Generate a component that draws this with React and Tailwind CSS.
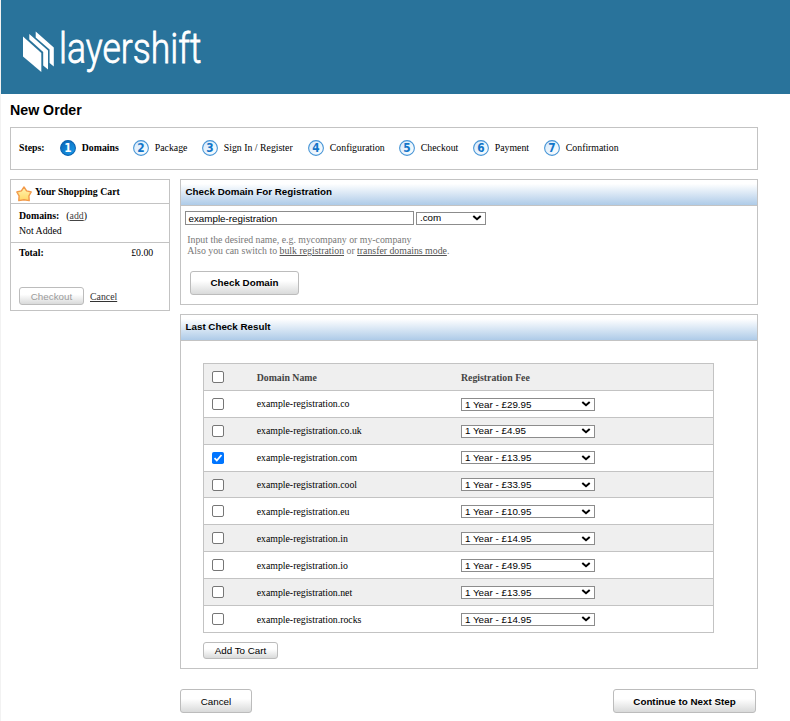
import React from "react";

const steps = [
  ["Domains", "w-[73px]"],
  ["Package", "w-[69px]"],
  ["Sign In / Register", "w-[106px]"],
  ["Configuration", "w-[91px]"],
  ["Checkout", "w-[74px]"],
  ["Payment", "w-[71px]"],
  ["Confirmation", "w-[80px]"],
];

const domains = [
  ["example-registration.co", "29.95"],
  ["example-registration.co.uk", "4.95"],
  ["example-registration.com", "13.95"],
  ["example-registration.cool", "33.95"],
  ["example-registration.eu", "10.95"],
  ["example-registration.in", "14.95"],
  ["example-registration.io", "49.95"],
  ["example-registration.net", "13.95"],
  ["example-registration.rocks", "14.95"],
];

const sans = "font-['Liberation_Sans',Arial,sans-serif]";

function Logo() {
  return (
    <svg className="block overflow-visible" width="200" height="60" viewBox="0 0 200 60">
      <g fill="#fff">
        <path d="M1 8.5 19.3 25V44L1 28.5Z" />
        <path d="M7.3 6 26 22.5V41.5L21.2 37.5V24L7.3 11.5Z" />
        <path d="M13.7 3.5 31.8 19.5V38.5L27.6 35V21.5L13.7 9.5Z" />
      </g>
      <text x="37" y="35" fill="#fff" stroke="#fff" strokeWidth="0.8" fontSize="42.5" fontFamily="Roboto, sans-serif" fontWeight="300" textLength="142.5" lengthAdjust="spacingAndGlyphs">layershift</text>
    </svg>
  );
}

function StepIcon({ n, active }) {
  const id = "step" + n;
  return (
    <svg width="16" height="16" viewBox="0 0 16 16" className="block shrink-0">
      <defs>
        <linearGradient id={id} x1="0" y1="0" x2="1" y2="1">
          <stop offset="0" stopColor={active ? "#0860b4" : "#d5e9fa"} />
          <stop offset="1" stopColor={active ? "#1aa0ee" : "#fff"} />
        </linearGradient>
      </defs>
      <circle cx="8" cy="8" r="7.4" fill={"url(#" + id + ")"} stroke={active ? "#0b62b0" : "#4795d6"} strokeWidth="1.1" />
      <text x="4.3" y="12" textLength="7.4" lengthAdjust="spacingAndGlyphs" fontSize="11.5" fontWeight="700" fontFamily="'DejaVu Sans', sans-serif" fill={active ? "#fff" : "#1275c9"}>{n}</text>
    </svg>
  );
}

function Star() {
  return (
    <svg width="16" height="16" viewBox="0 0 16 16" className="block shrink-0">
      <defs>
        <linearGradient id="star" x1="0" y1="0" x2="0" y2="1">
          <stop offset="0" stopColor="#fff6b4" />
          <stop offset="1" stopColor="#ffd766" />
        </linearGradient>
      </defs>
      <path d="M8 1 10.6 4.9 15.2 6 12.9 9.8 13.2 14.6 8 13.8 2.8 14.6 3.1 9.8 0.8 6 5.4 4.9Z" fill="url(#star)" stroke="#f29a4a" strokeWidth="1.4" strokeLinejoin="round" />
    </svg>
  );
}

function Select({ children, className }) {
  return (
    <div className={`flex h-[13px] items-center justify-between border border-[#8c8c8c] bg-white pl-[3px] pr-[3px] ${sans} ${className}`}>
      <span className="pt-[0.8px]">{children}</span>
      <svg width="10" height="6" viewBox="0 0 10 6" className="block"><path d="M1.3 1.1 5 4.3 8.7 1.1" fill="none" stroke="#000" strokeWidth="2" /></svg>
    </div>
  );
}

function Button({ children, className }) {
  return (
    <button className={`block rounded-[3px] border border-[#bcbcbc] bg-linear-to-b from-white from-40% to-[#d9dada] text-center text-[9.8px] ${sans} ${className}`}>
      {children}
    </button>
  );
}

function Checkbox({ checked }) {
  if (checked) {
    return (
      <svg width="12" height="12" viewBox="0 0 12 12" className="block">
        <rect width="12" height="12" rx="1.8" fill="#0075ff" />
        <path d="M2.5 6.2 4.8 8.5 9.5 3" fill="none" stroke="#fff" strokeWidth="1.8" />
      </svg>
    );
  }
  return <div className="size-[12px] rounded-[2px] border border-[#767676] bg-white" />;
}

function PanelTitle({ children }) {
  return (
    <h2 className={`h-[26px] border-b border-[#c3c3c3] bg-linear-to-b from-white from-15% to-[#aecbe8] pl-[4.5px] text-[9.8px] font-bold leading-[24px] ${sans}`}>
      {children}
    </h2>
  );
}

export default function App() {
  return (
    <div className="h-[721px] w-[790px] overflow-hidden border-l border-[#f2f2f2] bg-white font-['Liberation_Serif','Times_New_Roman',serif] text-[9.8px] leading-[12px] text-[#1a1a1a]">
      <header className="h-[94px] bg-[#29739b] pl-[21px] pt-[28px]">
        <Logo />
      </header>
      <div className="w-[757px] pl-[9px] text-black">
        <h1 className={`h-[33px] pt-[7px] text-[14.2px] font-bold leading-[18px] ${sans}`}>New Order</h1>

        <section className="flex h-[43px] items-center border border-[#c3c3c3] pb-[2px] pl-[8px]">
          <b className="w-[41px]">Steps:</b>
          {steps.map(([name, width], i) => (
            <div key={name} className={`flex shrink-0 items-center gap-[5.8px] whitespace-nowrap ${width}`}>
              <StepIcon n={i + 1} active={i === 0} />
              <span className={i === 0 ? "font-bold" : ""}>{name}</span>
            </div>
          ))}
        </section>

        <div className="mt-[9px] flex items-start gap-[10px]">
          <aside className="h-[132px] w-[160px] border border-[#c3c3c3]">
            <div className="flex h-[24px] items-start gap-[3px] border-b border-[#c3c3c3] pl-[5px] pt-[6px]">
              <Star />
              <b>Your Shopping Cart</b>
            </div>
            <div className="h-[39px] border-b border-[#c3c3c3] pl-[8px] pt-[4px] leading-[15px]">
              <div><b>Domains:</b><span className="ml-[7px]">(<a className="text-[#444] underline">add</a>)</span></div>
              <div>Not Added</div>
            </div>
            <div className="flex justify-between pl-[8px] pr-[15.8px] pt-[4px]">
              <b>Total:</b>
              <span>£0.00</span>
            </div>
            <div className="mt-[28px] flex items-center gap-[6px] pl-[8px]">
              <Button className="h-[18px] w-[65px] pt-px text-[#9b9b9b]">Checkout</Button>
              <a className="pt-[2px] text-[#333] underline">Cancel</a>
            </div>
          </aside>

          <main className="w-[578px]">
            <section className="h-[126px] border border-[#c3c3c3]">
              <PanelTitle>Check Domain For Registration</PanelTitle>
              <div className="flex items-center gap-[2px] pl-[4px] pt-[5px]">
                <div className={`h-[14px] w-[229px] border border-[#8c8c8c] pl-[2.5px] leading-[13px] ${sans}`}>example-registration</div>
                <Select className="w-[70px]">.com</Select>
              </div>
              <p className="mt-[9px] pl-[6.3px] leading-[11px] text-[#777]">
                Input the desired name, e.g. mycompany or my-company<br />
                Also you can switch to <a className="text-[#555] underline">bulk registration</a> or <a className="text-[#555] underline">transfer domains mode</a>.
              </p>
              <Button className="ml-[9px] mt-[15px] h-[24px] w-[109px] font-bold">Check Domain</Button>
            </section>

            <section className="mt-[9px] h-[355px] border border-[#c3c3c3]">
              <PanelTitle>Last Check Result</PanelTitle>
              <div className="ml-[22px] mt-[22px] w-[511px] border-x border-t border-[#c3c3c3]">
                <div className="flex h-[26.9px] items-center border-b border-[#c3c3c3] bg-[#efefef] pl-[8px] font-bold text-[#444]">
                  <div className="w-[44.7px]"><Checkbox /></div>
                  <div className="w-[204.3px] pt-[2px]">Domain Name</div>
                  <div className="pt-[2px]">Registration Fee</div>
                </div>
                {domains.map(([name, fee], i) => (
                  <div key={name} className={`flex h-[26.9px] items-center border-b border-[#c3c3c3] pl-[8px] ${i % 2 ? "bg-[#efefef]" : "bg-white"}`}>
                    <div className="w-[44.7px]"><Checkbox checked={i === 2} /></div>
                    <div className="w-[204.3px] pt-[1.3px]">{name}</div>
                    <div className="pt-[0.6px]"><Select className="w-[134px]">1 Year - £{fee}</Select></div>
                  </div>
                ))}
              </div>
              <Button className="ml-[22px] mt-[9px] h-[17px] w-[75px] pt-px">Add To Cart</Button>
            </section>

            <div className="mt-[20px] flex justify-between pr-[2px]">
              <Button className="h-[24px] w-[72px] pt-[2px]">Cancel</Button>
              <Button className="h-[24px] w-[143px] pt-[2px] font-bold">Continue to Next Step</Button>
            </div>
          </main>
        </div>
      </div>
    </div>
  );
}
